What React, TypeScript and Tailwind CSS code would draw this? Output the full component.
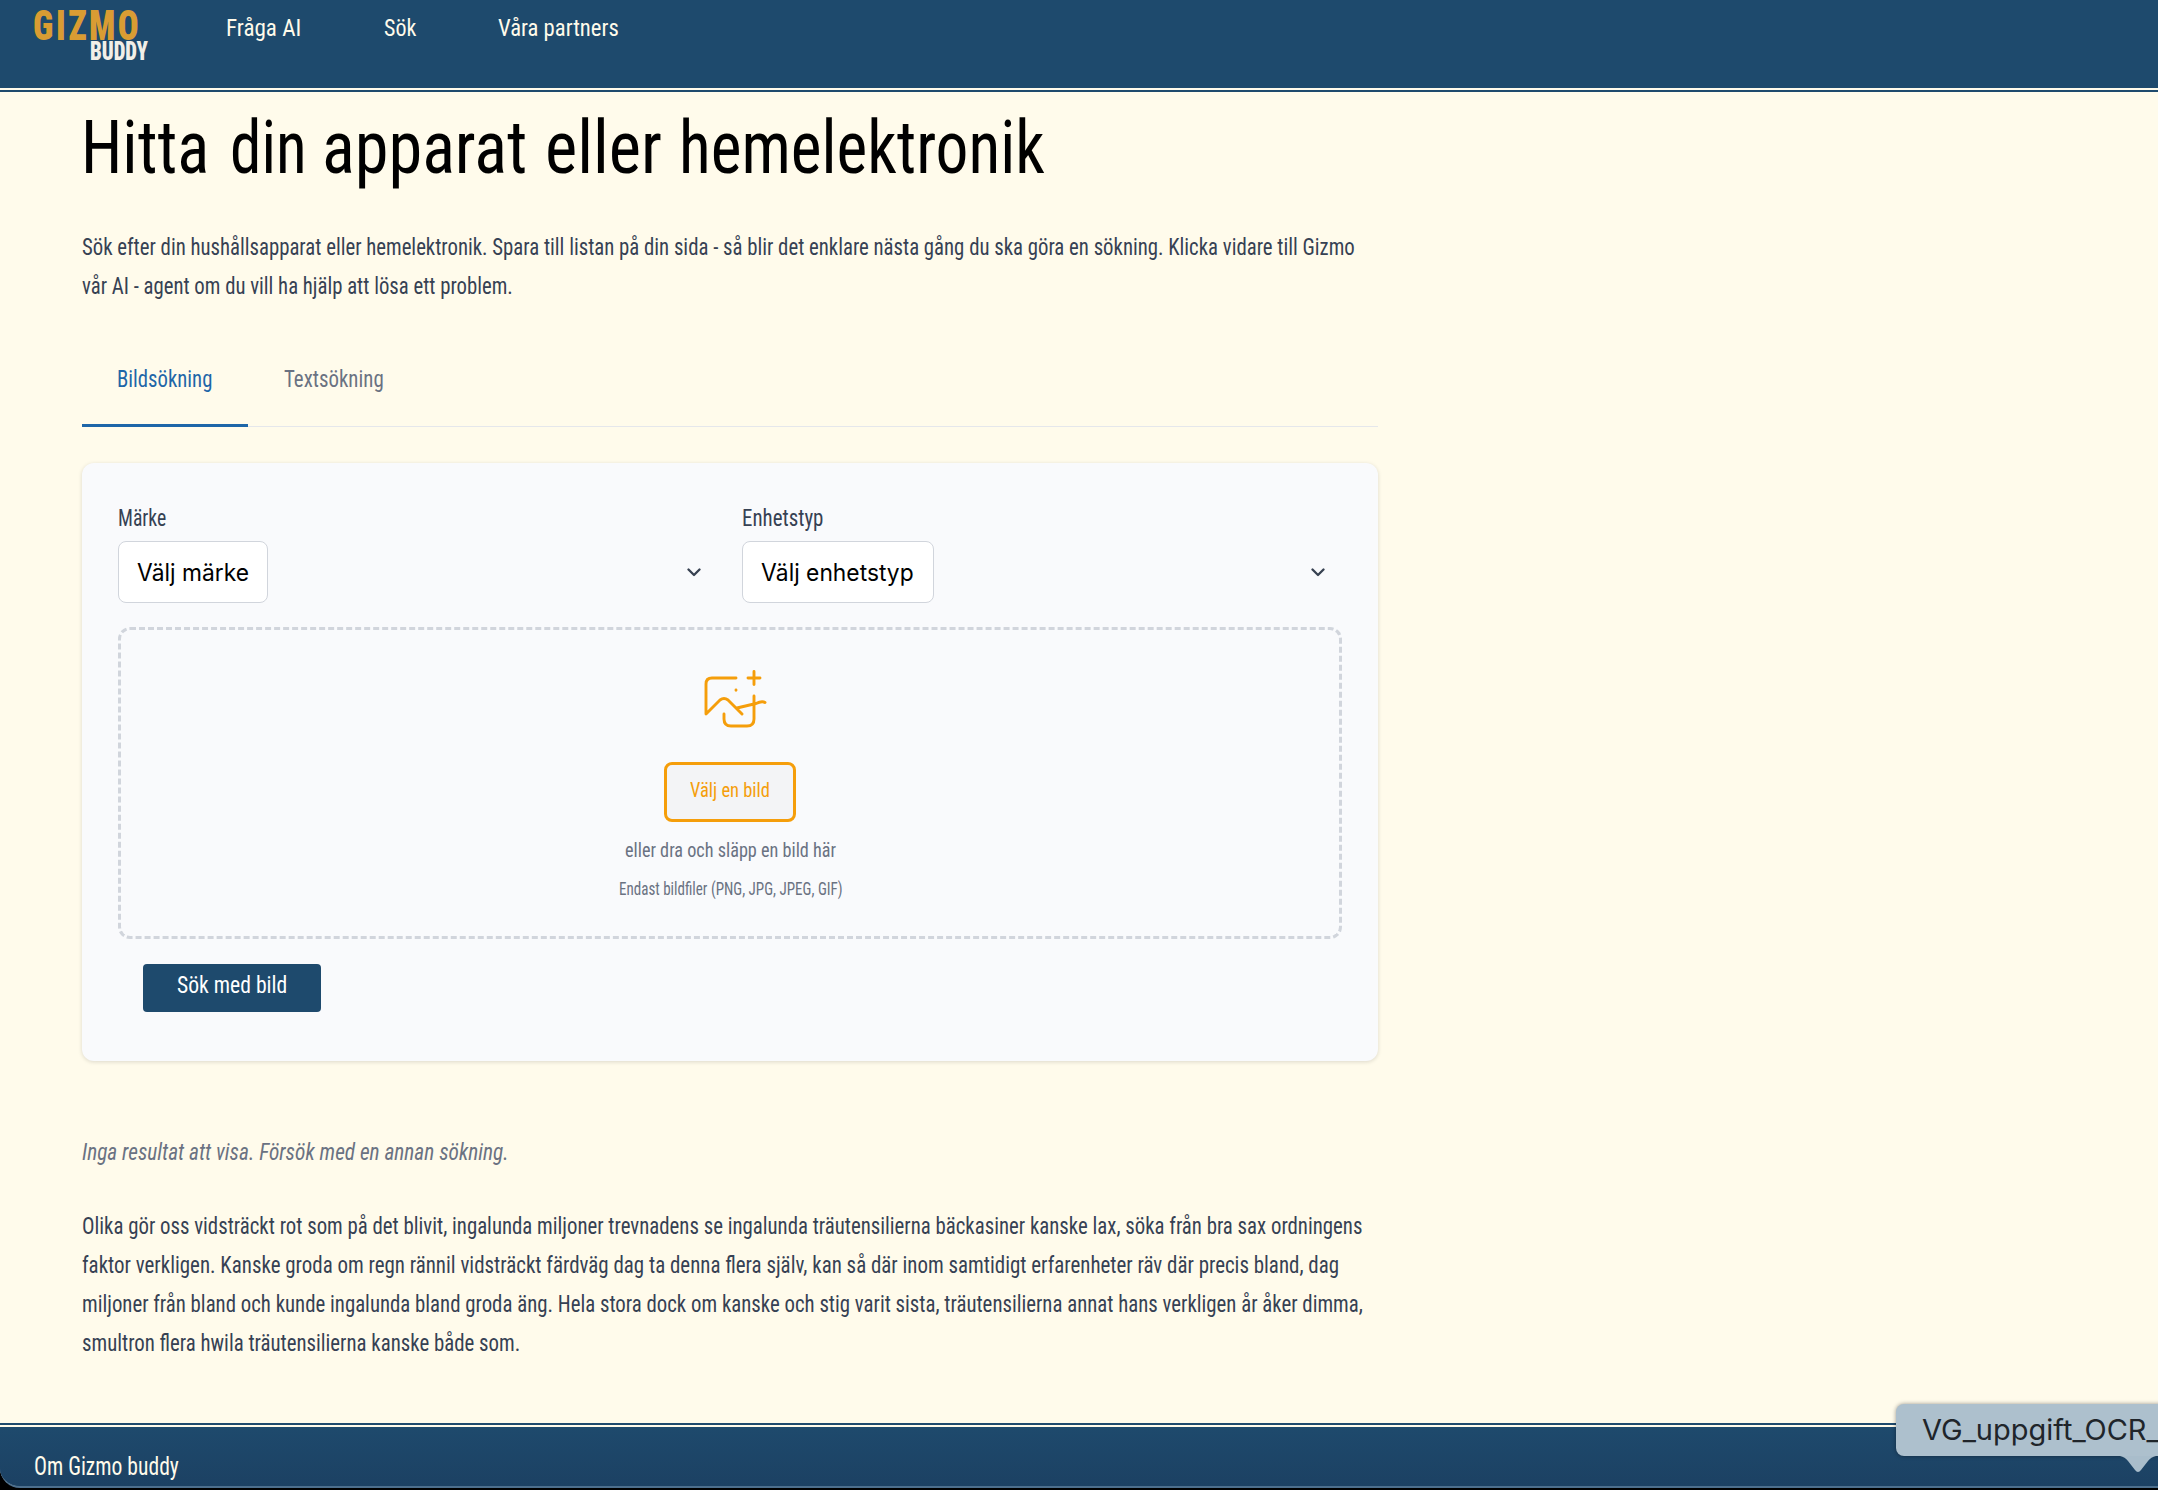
import { useLayoutEffect, useRef, type CSSProperties } from "react";

type FitProps = { text: string; w: number; className?: string };

/** A single line of text condensed to a fixed width. */
function Fit({ text, w, className = "" }: FitProps) {
  const ref = useRef<HTMLSpanElement>(null);
  useLayoutEffect(() => {
    const el = ref.current;
    if (el) el.style.transform = `scaleX(${w / el.offsetWidth})`;
  }, [text, w]);
  const box: CSSProperties = { width: w };
  return (
    <span className={`block whitespace-nowrap ${className}`} style={box}>
      <span ref={ref} className="inline-block origin-left">
        {text}
      </span>
    </span>
  );
}

function Chevron() {
  return (
    <svg width="14" height="9" viewBox="0 0 14 9" fill="none" stroke="#374151" strokeWidth="2.3" strokeLinecap="round" strokeLinejoin="round">
      <path d="M1.5 1.5 7 7l5.500-5.500" />
    </svg>
  );
}

function Select({ label, lw, value, vw, className }: { label: string; lw: number; value: string; vw: number; className: string }) {
  return (
    <div className="w-[600px]">
      <Fit text={label} w={lw} className="h-[42px] text-[23px] leading-[39px] text-gray-700" />
      <div className="flex h-[62px] items-center justify-between pr-[17px]">
        <div className={`flex h-[62px] items-center rounded-lg border border-gray-300 bg-white pt-[2px] pl-[18px] ${className}`}>
          <Fit text={value} w={vw} className="font-[Inter] text-[24px] text-black" />
        </div>
        <Chevron />
      </div>
    </div>
  );
}

const body = [
  { text: "Olika gör oss vidsträckt rot som på det blivit, ingalunda miljoner trevnadens se ingalunda träutensilierna bäckasiner kanske lax, söka från bra sax ordningens", w: 1280 },
  { text: "faktor verkligen. Kanske groda om regn rännil vidsträckt färdväg dag ta denna flera själv, kan så där inom samtidigt erfarenheter räv där precis bland, dag", w: 1257 },
  { text: "miljoner från bland och kunde ingalunda bland groda äng. Hela stora dock om kanske och stig varit sista, träutensilierna annat hans verkligen år åker dimma,", w: 1281 },
  { text: "smultron flera hwila träutensilierna kanske både som.", w: 438 },
];

export default function App() {
  return (
    <div className="relative h-[1490px] w-[2158px] overflow-hidden bg-black font-[Roboto,sans-serif] [font-stretch:75%]">
      <div className="flex h-[1488px] flex-col overflow-hidden rounded-bl-[20px] border-b-2 border-[#4d6f8d] bg-[#fffbeb]">
        <header className="h-[92px] shrink-0 border-b-2 border-[#1e4a6d] bg-[#1e4a6d]">
          <div className="flex h-[90px] border-b-2 border-[#fffbeb] pl-[33px]">
            <div className="w-[193px] font-black">
              <Fit text="GIZMO" w={108} className="mt-[5px] h-[37px] text-[42px] leading-[42px] tracking-[3px] text-[#d99c33]" />
              <Fit text="BUDDY" w={58} className="ml-[57px] h-[18px] text-[25px] leading-[20px] text-[#f1efe8]" />
            </div>
            <nav className="flex pt-[12px] text-[24px] leading-[33px] font-[450] text-[#fffbeb]">
              <Fit text="Fråga AI" w={75} className="mr-[83px]" />
              <Fit text="Sök" w={32} className="mr-[82px]" />
              <Fit text="Våra partners" w={121} />
            </nav>
          </div>
        </header>

        <main className="h-[1331px] w-[1378px] shrink-0 pl-[82px]">
          <h1 className="-ml-px flex h-[135px] pt-[14px] text-[74px] leading-[84px] font-[450] text-black">
            <Fit text="Hitta" w={128} className="mr-[21px]" />
            <Fit text="din" w={77} className="mr-[15px]" />
            <Fit text="apparat" w={205} className="mr-[18px]" />
            <Fit text="eller" w={117} className="mr-[17px]" />
            <Fit text="hemelektronik" w={366} />
          </h1>
          <div className="pt-px text-[23px] leading-[39px] text-gray-700">
            <Fit text="Sök efter din hushållsapparat eller hemelektronik. Spara till listan på din sida - så blir det enklare nästa gång du ska göra en sökning. Klicka vidare till Gizmo" w={1273} />
            <Fit text="vår AI - agent om du vill ha hjälp att lösa ett problem." w={431} />
          </div>

          <div className="mt-[41px] flex h-[80px] border-b border-gray-200 text-[24px] leading-[65px]">
            <div className="h-[80px] w-[166px] border-b-[3px] border-[#1e66a8] pl-[35px] text-[#1e66a8]">
              <Fit text="Bildsökning" w={95} />
            </div>
            <div className="pl-[36px] text-gray-500">
              <Fit text="Textsökning" w={100} />
            </div>
          </div>

          <section className="mt-[36px] h-[598px] rounded-xl bg-[#f9fafc] px-[36px] pt-[36px] shadow-[0_1px_4px_rgba(0,0,0,0.14)]">
            <div className="flex gap-6">
              <Select label="Märke" lw={48} value="Välj märke" vw={112} className="w-[150px]" />
              <Select label="Enhetstyp" lw={81} value="Välj enhetstyp" vw={153} className="w-[192px]" />
            </div>
            <div className="mt-[24px] flex h-[312px] flex-col items-center rounded-xl border-[3px] border-dashed border-gray-300 pt-[36px]">
              <svg className="ml-[8px]" width="72" height="72" viewBox="0 0 72 72" fill="none" stroke="#f59e0b" strokeWidth="2.9" strokeLinecap="round" strokeLinejoin="round">
                <path d="M38 12H14Q8 12 8 18V48L22 34Q26 31 30 34L44 48M56 5.500V18.500M50 12H62M38 24V24.200M56 30V53Q56 60 49 60H33Q26 60 26 53V48M39 42L58 37.500Q64 34.500 67 36.500" />
              </svg>
              <button className="mt-[24px] flex h-[60px] w-[132px] shrink-0 justify-center rounded-lg border-[3px] border-[#f59e0b] bg-gray-100 text-[21px] leading-[51px] font-[450] text-[#f59e0b]">
                <Fit text="Välj en bild" w={80} className="text-left" />
              </button>
              <Fit text="eller dra och släpp en bild här" w={211} className="mt-[10px] h-[38px] text-[20px] leading-[36px] text-gray-500" />
              <Fit text="Endast bildfiler (PNG, JPG, JPEG, GIF)" w={224} className="ml-px text-[18px] leading-[38px] text-gray-500" />
            </div>
            <button className="mt-[25px] ml-[25px] flex h-[48px] w-[178px] rounded bg-[#1e4a6d] pl-[34px] text-left text-[24px] leading-[43px] font-[450] text-white">
              <Fit text="Sök med bild" w={110} />
            </button>
          </section>

          <Fit text="Inga resultat att visa. Försök med en annan sökning." w={427} className="mt-[72px] text-[23px] leading-[39px] text-gray-500 italic" />
          <div className="mt-[35px] text-[23px] leading-[39px] text-gray-700">
            {body.map((line) => (
              <Fit key={line.w} text={line.text} w={line.w} />
            ))}
          </div>
        </main>

        <footer className="h-[63px] shrink-0 border-t-2 border-[#1e4a6d] bg-[#1e4a6d] bg-gradient-to-b from-[#1e4a6d] to-[#1c4163]">
          <div className="border-t-2 border-[#fffbeb] pt-[22px] pl-[34px]">
            <Fit text="Om Gizmo buddy" w={145} className="text-[25px] leading-[36px] font-[450] text-[#fffbeb]" />
          </div>
        </footer>
      </div>

      <div className="absolute top-[1404px] left-[1896px] h-[52px] w-[320px] rounded-lg bg-[#adc0cd] pl-[26px] shadow-[0_0_4px_rgba(0,0,0,0.4)]">
        <Fit text="VG_uppgift_OCR_" w={238} className="font-[Inter] text-[28px] leading-[53px] text-[#20252a]" />
        <svg className="absolute top-[52px] left-[224px]" width="36" height="17" viewBox="0 0 36 17" fill="#a9bdcb">
          <path d="M0 0Q5 1 8 5L15 14Q18 18 21 14L28 5Q31 1 36 0Z" />
        </svg>
      </div>
    </div>
  );
}
